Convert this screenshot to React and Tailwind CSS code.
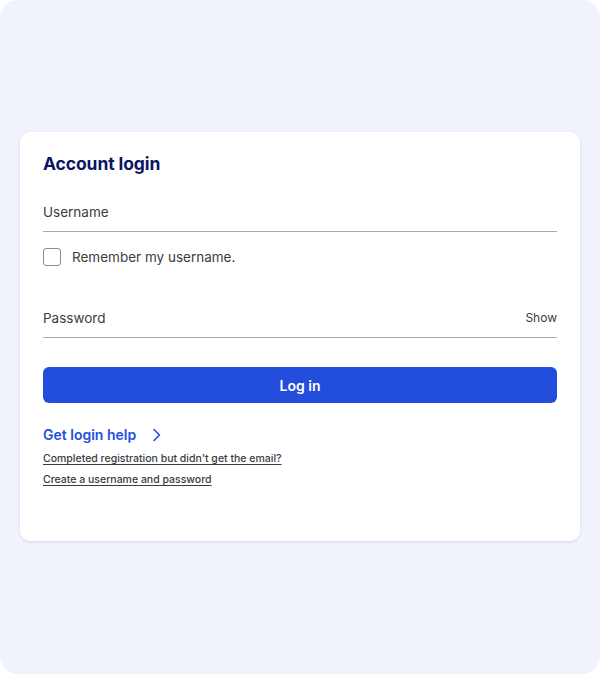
import { useState } from 'react';

function Field({ label, right, className }) {
  return (
    <div className={`flex items-end justify-between border-b-[1.5px] border-[#a9a9ad] pb-[9px] ${className || ''}`}>
      <span className="text-[13.5px] leading-[20px] text-[#3c3c41]">{label}</span>
      {right ? <span className="text-[12px] leading-[20px] text-[#3c3c41]">{right}</span> : null}
    </div>
  );
}

export default function App() {
  const [remember, setRemember] = useState(false);

  return (
    <div className="h-[674px] w-[600px] bg-white" style={{ fontFamily: 'Inter, "Noto Sans", sans-serif' }}>
      <div className="h-full rounded-[18px] bg-[#f0f3fc] px-5 pt-[132px]">
        <div className="h-[409px] rounded-[10px] bg-white px-[23px] pt-[20px] shadow-[0_1px_3px_rgba(30,40,80,0.12)]">
          <h1 className="text-[17.5px] font-bold leading-[24px] tracking-[-0.1px] text-[#0b1566]">Account login</h1>

          <Field label="Username" className="mt-[26px]" />

          <label className="mt-[15px] flex items-center gap-[11px]">
            <input
              type="checkbox"
              checked={remember}
              onChange={(e) => setRemember(e.target.checked)}
              className="h-[18px] w-[18px] appearance-none rounded-[3px] border-[1.5px] border-[#8d8d92] bg-white"
            />
            <span className="text-[13.5px] leading-[20px] text-[#3c3c41]">Remember my username.</span>
          </label>

          <Field label="Password" right="Show" className="mt-[41px]" />

          <button className="mt-[29px] h-[36px] w-full rounded-[6px] bg-[#234ddb] text-[14px] font-semibold text-white">
            Log in
          </button>

          <a className="mt-[22px] flex items-center gap-[16px] text-[14px] font-semibold leading-[20px] text-[#2450dc]">
            Get login help
            <svg width="9" height="14" viewBox="0 0 9 14" fill="none" stroke="currentColor" strokeWidth="1.6" strokeLinecap="round" strokeLinejoin="round">
              <path d="M2 1.5 7.5 7 2 12.5" />
            </svg>
          </a>

          <div className="mt-[7px] space-y-[7px] text-[10.5px] font-medium leading-[14px] text-[#3a3a42]">
            <a className="block underline underline-offset-[2px]">Completed registration but didn't get the email?</a>
            <a className="block underline underline-offset-[2px]">Create a username and password</a>
          </div>
        </div>
      </div>
    </div>
  );
}
